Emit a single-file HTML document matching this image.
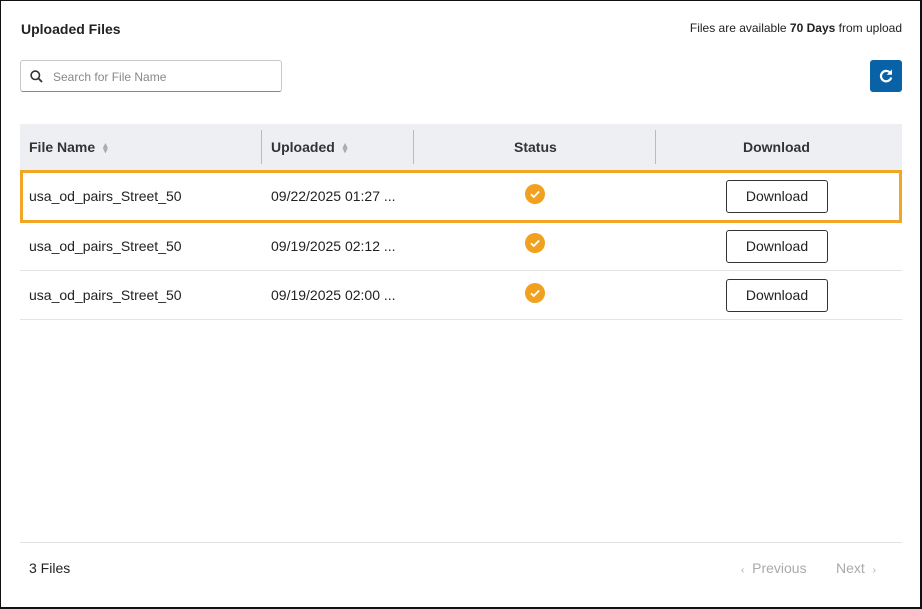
<!DOCTYPE html>
<html><head><style>
*{box-sizing:border-box;margin:0;padding:0}
body{width:922px;height:609px;background:#fff;font-family:"Liberation Sans",sans-serif;color:#222;position:relative;overflow:hidden}
.frame{position:absolute;left:0;top:0;width:922px;height:609px;border:1px solid #111;border-right-width:2px;border-bottom-width:2px}
.abs{position:absolute}
.title{left:21px;top:21px;font-size:14px;font-weight:bold;color:#222}
.avail{right:20px;top:21px;font-size:12px;color:#222}
.search{left:20px;top:60px;width:262px;height:32px;border:1px solid #c8c8c8;border-bottom-color:#888;border-radius:3px;font-size:12px;color:#888;padding:9px 0 0 32px}
.refresh{left:870px;top:60px;width:32px;height:32px;background:#0a62a6;border-radius:3px}
.hdr{left:20px;top:124px;width:882px;height:46px;background:#eeeff3}
.th{position:absolute;top:15px;font-size:14px;font-weight:bold;color:#333}
.sep{position:absolute;top:6px;width:1px;height:34px;background:#bbb}
.row{left:20px;width:882px;height:49px;border-bottom:1px solid #e4e4e4}
.cell{position:absolute;font-size:14px;color:#222}
.hl{left:20px;top:170px;width:882px;height:53px;border:3px solid #f2a623}
.chk{position:absolute;width:20px;height:20px;border-radius:50%;background:#f0a11f}
.btn{position:absolute;width:102px;height:33px;border:1px solid #333;border-radius:3px;font-size:14px;text-align:center;line-height:31px;color:#222}
.sort{display:inline-block;margin-left:8px;color:#aaa;font-size:9px;vertical-align:middle;line-height:5px}
</style></head><body>
<div class="frame"></div>
<div class="abs title">Uploaded Files</div>
<div class="abs avail">Files are available <b>70 Days</b> from upload</div>
<div class="abs search">Search for File Name
<svg style="position:absolute;left:9px;top:9px" width="13" height="13" viewBox="0 0 13 13"><circle cx="5.3" cy="5.3" r="4.2" fill="none" stroke="#333" stroke-width="1.6"/><path d="M8.3 8.3L12 12" stroke="#333" stroke-width="1.8"/></svg></div>
<div class="abs refresh"><svg style="position:absolute;left:8px;top:8px" width="16" height="16" viewBox="0 0 16 16"><path d="M12.5 5.2A5.2 5.2 0 1 0 13.2 9.5" fill="none" stroke="#fff" stroke-width="2.2"/><path d="M14 1.5V6.8H8.7Z" fill="#fff"/></svg></div>
<div class="abs hdr">
<div class="th" style="left:9px">File Name<span class="sort">▴<br>▾</span></div>
<div class="sep" style="left:241px"></div>
<div class="th" style="left:251px">Uploaded<span class="sort">▴<br>▾</span></div>
<div class="sep" style="left:393px"></div>
<div class="th" style="left:494px">Status</div>
<div class="sep" style="left:635px"></div>
<div class="th" style="left:723px">Download</div>
</div>
<div class="abs row" style="top:222px"></div>
<div class="abs row" style="top:271px"></div>
<div class="cell" style="left:29px;top:188px">usa_od_pairs_Street_50</div>
<div class="cell" style="left:271px;top:188px">09/22/2025 01:27 ...</div>
<div class="chk" style="left:525px;top:184px"></div>
<div class="btn" style="left:726px;top:180px">Download</div>
<div class="cell" style="left:29px;top:238px">usa_od_pairs_Street_50</div>
<div class="cell" style="left:271px;top:238px">09/19/2025 02:12 ...</div>
<div class="chk" style="left:525px;top:233px"></div>
<div class="btn" style="left:726px;top:230px">Download</div>
<div class="cell" style="left:29px;top:287px">usa_od_pairs_Street_50</div>
<div class="cell" style="left:271px;top:287px">09/19/2025 02:00 ...</div>
<div class="chk" style="left:525px;top:283px"></div>
<div class="btn" style="left:726px;top:279px">Download</div>
<div class="abs hl"></div>
<svg class="abs" style="left:525px;top:184px" width="20" height="20"><path d="M6 10.3l2.8 2.7 5.3-5.5" fill="none" stroke="#fff" stroke-width="1.8"/></svg>
<svg class="abs" style="left:525px;top:233px" width="20" height="20"><path d="M6 10.3l2.8 2.7 5.3-5.5" fill="none" stroke="#fff" stroke-width="1.8"/></svg>
<svg class="abs" style="left:525px;top:283px" width="20" height="20"><path d="M6 10.3l2.8 2.7 5.3-5.5" fill="none" stroke="#fff" stroke-width="1.8"/></svg>
<div class="abs" style="left:20px;top:542px;width:882px;height:1px;background:#e2e2e2"></div>
<div class="cell" style="left:29px;top:560px">3 Files</div>
<div class="cell" style="left:741px;top:560px;color:#aaa"><span style="font-size:10px">‹</span>&nbsp; Previous</div>
<div class="cell" style="left:836px;top:560px;color:#aaa">Next &nbsp;<span style="font-size:10px">›</span></div>
</body></html>
